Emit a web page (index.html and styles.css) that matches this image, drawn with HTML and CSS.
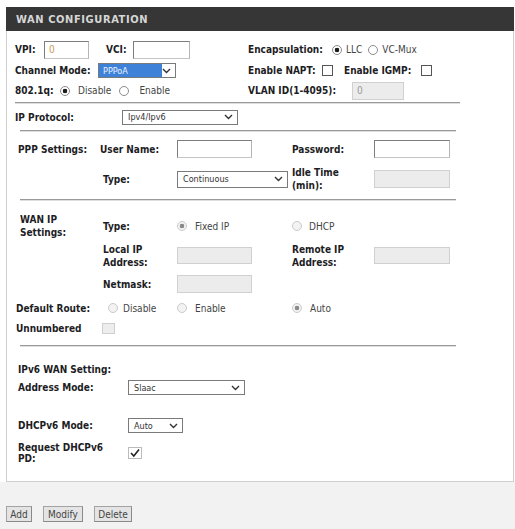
FILE: index.html
```html
<!DOCTYPE html>
<html>
<head>
<meta charset="utf-8">
<title>WAN Configuration</title>
<link rel="stylesheet" href="styles.css">
</head>
<body>
<div class="panel">
  <div class="head">WAN CONFIGURATION</div>

  <div class="top">
    <div class="trow r1">
      <div class="tl">
        <span class="lb w29">VPI:</span><input class="txt w45 orange" type="text" value="0">
        <span class="lb w27 ml17">VCI:</span><input class="txt w57" type="text" value="">
      </div>
      <div class="tr">
        <span class="lb w84">Encapsulation:</span>
        <input class="rd" type="radio" name="enc" checked><span class="val ml4">LLC</span>
        <input class="rd ml6" type="radio" name="enc"><span class="val ml4">VC-Mux</span>
      </div>
    </div>
    <div class="trow r2">
      <div class="tl">
        <span class="lb w83">Channel Mode:</span>
        <div class="sel w78 hi"><span class="seltxt">PPPoA</span><svg class="chev" width="9" height="6" viewBox="0 0 9 6"><path d="M1 1 L4.5 4.5 L8 1" fill="none" stroke="#333" stroke-width="1.4"/></svg></div>
      </div>
      <div class="tr">
        <span class="lb w74">Enable NAPT:</span><span class="cb"></span>
        <span class="lb w77 ml11">Enable IGMP:</span><span class="cb"></span>
      </div>
    </div>
    <div class="trow r3">
      <div class="tl">
        <span class="lb w45">802.1q:</span>
        <input class="rd" type="radio" name="q" checked><span class="val ml8">Disable</span>
        <input class="rd ml8" type="radio" name="q"><span class="val ml10">Enable</span>
      </div>
      <div class="tr">
        <span class="lb w104">VLAN ID(1-4095):</span><input class="txt dis w52" type="text" value="0" disabled>
      </div>
    </div>
  </div>
  <div class="sep s1"></div>

  <div class="iprow">
    <span class="lb w107">IP Protocol:</span>
    <div class="sel w116"><span class="seltxt">Ipv4/Ipv6</span><svg class="chev" width="9" height="6" viewBox="0 0 9 6"><path d="M1 1 L4.5 4.5 L8 1" fill="none" stroke="#333" stroke-width="1.4"/></svg></div>
  </div>
  <div class="sep s2"></div>

  <div class="grid ppp">
    <div class="g5 h34">
      <span class="lb pl3">PPP Settings:</span>
      <span class="lb">User Name:</span>
      <span><input class="txt w75" type="text"></span>
      <span class="lb">Password:</span>
      <span><input class="txt w76" type="text"></span>
    </div>
    <div class="g5 h26">
      <span></span>
      <span class="lb pl3">Type:</span>
      <span><div class="sel w111 h17"><span class="seltxt">Continuous</span><svg class="chev" width="9" height="6" viewBox="0 0 9 6"><path d="M1 1 L4.5 4.5 L8 1" fill="none" stroke="#333" stroke-width="1.4"/></svg></div></span>
      <span class="lb two">Idle Time<br>(min):</span>
      <span><input class="txt dis w76" type="text" disabled></span>
    </div>
  </div>
  <div class="sep s3"></div>

  <div class="grid wan">
    <div class="g5 h20">
      <span class="lb two pl5">WAN IP<br>Settings:</span>
      <span class="lb pl3">Type:</span>
      <span class="item"><input class="rd dr" type="radio" name="t" checked disabled><span class="val ml8">Fixed IP</span></span>
      <span class="item"><input class="rd dr" type="radio" name="t" disabled><span class="val ml7">DHCP</span></span>
      <span></span>
    </div>
    <div class="g5 h29 mt8">
      <span></span>
      <span class="lb two pl3">Local IP<br>Address:</span>
      <span><input class="txt dis w75 h17" type="text" disabled></span>
      <span class="lb two">Remote IP<br>Address:</span>
      <span><input class="txt dis w76 h17" type="text" disabled></span>
    </div>
    <div class="g5 h28">
      <span></span>
      <span class="lb pl3">Netmask:</span>
      <span><input class="txt dis w75" type="text" disabled></span>
      <span></span>
      <span></span>
    </div>
    <div class="g5 h20">
      <span class="lb nw pl1">Default Route:</span>
      <span class="item pl8"><input class="rd dr" type="radio" name="d" disabled><span class="val ml5">Disable</span></span>
      <span class="item"><input class="rd dr" type="radio" name="d" disabled><span class="val ml8">Enable</span></span>
      <span class="item"><input class="rd dr" type="radio" name="d" checked disabled><span class="val ml8">Auto</span></span>
      <span></span>
    </div>
    <div class="g5 h20">
      <span class="lb nw pl1">Unnumbered</span>
      <span class="item pl2"><span class="cb dcb"></span></span>
      <span></span><span></span><span></span>
    </div>
  </div>
  <div class="sep s4"></div>

  <div class="ipv6">
    <div class="vrow h20"><span class="lb">IPv6 WAN Setting:</span></div>
    <div class="vrow h17">
      <span class="lb w110">Address Mode:</span>
      <div class="sel w117"><span class="seltxt">Slaac</span><svg class="chev" width="9" height="6" viewBox="0 0 9 6"><path d="M1 1 L4.5 4.5 L8 1" fill="none" stroke="#333" stroke-width="1.4"/></svg></div>
    </div>
    <div class="vrow h17 mt21">
      <span class="lb w110">DHCPv6 Mode:</span>
      <div class="sel w55"><span class="seltxt">Auto</span><svg class="chev" width="9" height="6" viewBox="0 0 9 6"><path d="M1 1 L4.5 4.5 L8 1" fill="none" stroke="#333" stroke-width="1.4"/></svg></div>
    </div>
    <div class="vrow h26 mt6">
      <span class="lb w110 two11">Request DHCPv6<br>PD:</span>
      <span class="cb big"><svg width="12" height="10" viewBox="0 0 12 10"><path d="M2 5 L4.8 8 L10 1.5" fill="none" stroke="#222" stroke-width="1.6"/></svg></span>
    </div>
  </div>
</div>

<div class="footer">
  <button class="btn w26" type="button">Add</button>
  <button class="btn w40" type="button">Modify</button>
  <button class="btn w38" type="button">Delete</button>
</div>
</body>
</html>
```

FILE: styles.css
```css
* { box-sizing: border-box; }

html, body {
  margin: 0;
  background: #ffffff;
}

body {
  font-family: "DejaVu Sans Condensed", "Liberation Sans", sans-serif;
  font-size: 10px;
  color: #444;
}

.panel {
  margin: 7px 1px 0 6px;
  border: 1px solid #cfcfcf;
  border-top: none;
  background: #fff;
  padding-bottom: 15px;
}

.head {
  height: 24px;
  margin: 0 -1px;
  background: #363636;
  color: #d6d6d6;
  font-weight: bold;
  font-size: 11px;
  letter-spacing: 0.6px;
  line-height: 25px;
  padding-left: 10px;
}

.lb {
  font-weight: bold;
  color: #1d1d24;
  white-space: nowrap;
  display: inline-block;
}

.val {
  color: #444;
  white-space: nowrap;
}

.nw { white-space: nowrap; }

/* top section */
.top { padding: 8px 0 0 8px; }
.trow { display: flex; align-items: center; }
.r1 { height: 21px; }
.r2 { height: 21px; }
.r3 { height: 19px; }
.tl { width: 233px; display: flex; align-items: center; }
.tr { display: flex; align-items: center; }

/* text inputs */
.txt {
  height: 18px;
  margin: 0;
  padding: 0 0 0 4px;
  border: 1px solid #7d7d7d;
  border-right-color: #b5b5b5;
  border-bottom-color: #c4c4c4;
  background: #fff;
  font: 10px "DejaVu Sans Condensed", "Liberation Sans", sans-serif;
  color: #444;
  outline: none;
}
.txt.h17 { height: 17px; }
.txt.orange { color: #c89a55; }
.txt.dis {
  background: #ececec;
  border-color: #d0d0d0;
  color: #9a9a9a;
}

/* select lookalikes */
.sel {
  height: 15px;
  display: inline-flex;
  align-items: center;
  justify-content: space-between;
  border: 1px solid #7a7a7a;
  background: #fff;
  padding: 0 4px 0 5px;
  font-size: 9px;
  color: #333;
}
.sel.h17 { height: 17px; }
.sel.hi {
  padding-left: 0;
  background: linear-gradient(to right, #3d82d8 0, #3d82d8 63px, #fff 63px);
}
.sel.hi .seltxt {
  color: #e8f0ff;
  padding-left: 4px;
}
.chev { display: block; }

/* radios */
.rd {
  appearance: none;
  -webkit-appearance: none;
  width: 10px;
  height: 10px;
  margin: 0;
  border: 1px solid #8c8c8c;
  border-radius: 50%;
  background: #fff;
  flex: none;
}
.rd:checked {
  background: radial-gradient(circle, #1c1c1c 0, #1c1c1c 2px, #fff 2.6px);
}
.rd.dr {
  border-color: #cacaca;
  background: #f3f3f3;
}
.rd.dr:checked {
  background: radial-gradient(circle, #8a8a8a 0, #8a8a8a 2px, #f3f3f3 2.6px);
}

/* checkboxes */
.cb {
  display: inline-flex;
  align-items: center;
  justify-content: center;
  width: 11px;
  height: 11px;
  border: 1px solid #555;
  background: #fff;
  flex: none;
}
.cb.dcb {
  width: 13px;
  height: 11px;
  border-color: #cfcfcf;
  background: #ededed;
}
.cb.big {
  width: 14px;
  height: 12px;
  border-color: #bbb;
}

/* separators */
.sep {
  height: 2px;
  border-top: 1px solid #9a9a9a;
  border-bottom: 1px solid #dedede;
}
.s1 { margin: 2px 0 0 8px; width: 445px; }
.s2 { margin: 0 0 0 13px; width: 436px; }
.s3 { margin: 7px 0 0 13px; width: 436px; }
.s4 { margin: 7px 0 0 13px; width: 436px; }

/* IP protocol row */
.iprow {
  display: flex;
  align-items: center;
  height: 26px;
  padding-left: 8px;
}

/* grid sections */
.grid { padding-left: 8px; }
.wan { padding-top: 12px; }
.g5 {
  display: grid;
  grid-template-columns: 85px 77px 115px 82px 1fr;
  align-items: center;
}
.item { display: flex; align-items: center; }
.two { line-height: 13px; }
.two11 { line-height: 11px; }

/* ipv6 */
.ipv6 { padding: 12px 0 0 11px; }
.vrow { display: flex; align-items: center; }

/* footer */
.footer {
  background: #f2f2f2;
  min-height: 48px;
  padding: 24px 0 0 6px;
  display: flex;
  align-items: flex-start;
  gap: 11px;
}
.btn {
  height: 16px;
  margin: 0;
  padding: 0;
  border: 1px solid #a3a3a3;
  border-right-color: #8a8a8a;
  border-bottom-color: #8a8a8a;
  background: #e4e4e4;
  font: 10px "DejaVu Sans Condensed", "Liberation Sans", sans-serif;
  color: #444;
}

/* widths */
.w26 { width: 26px; }
.w27 { width: 27px; }
.w29 { width: 29px; }
.w38 { width: 38px; }
.w40 { width: 40px; }
.w45 { width: 45px; }
.w52 { width: 52px; }
.w55 { width: 55px; }
.w57 { width: 57px; }
.w74 { width: 74px; }
.w75 { width: 75px; }
.w76 { width: 76px; }
.w77 { width: 77px; }
.w78 { width: 78px; }
.w83 { width: 83px; }
.w84 { width: 84px; }
.w104 { width: 104px; }
.w107 { width: 107px; }
.w110 { width: 110px; }
.w111 { width: 111px; }
.w116 { width: 116px; }
.w117 { width: 117px; }

/* spacing utilities (after component rules so they win) */
.ml4 { margin-left: 4px; }
.ml5 { margin-left: 5px; }
.ml6 { margin-left: 6px; }
.ml7 { margin-left: 7px; }
.ml8 { margin-left: 8px; }
.ml10 { margin-left: 10px; }
.ml11 { margin-left: 11px; }
.ml17 { margin-left: 17px; }
.mt6 { margin-top: 6px; }
.mt8 { margin-top: 8px; }
.mt21 { margin-top: 21px; }
.pl1 { padding-left: 1px; }
.pl2 { padding-left: 2px; }
.pl3 { padding-left: 3px; }
.pl5 { padding-left: 5px; }
.pl8 { padding-left: 8px; }

.h17 { height: 17px; }
.h20 { height: 20px; }
.h26 { height: 26px; }
.h28 { height: 28px; }
.h29 { height: 29px; }
.h34 { height: 34px; }
```
